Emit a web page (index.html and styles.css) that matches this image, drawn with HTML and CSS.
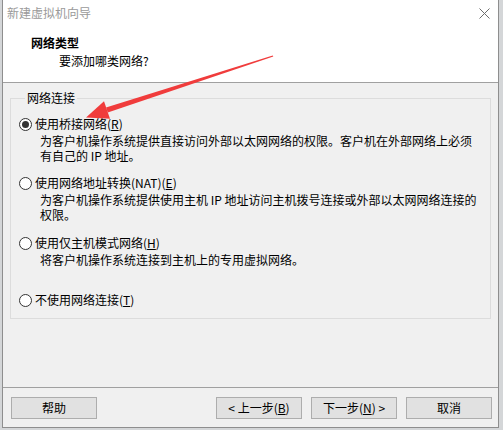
FILE: index.html
```html
<!DOCTYPE html>
<html lang="zh-CN">
<head>
<meta charset="utf-8">
<title>新建虚拟机向导</title>
<link rel="stylesheet" href="styles.css">
</head>
<body>
<div class="window">
  <div class="titlebar">
    <span class="title">新建虚拟机向导</span>
    <svg class="close" width="11" height="11" viewBox="0 0 11 11"><path d="M0.5 0.5L10.5 10.5M10.5 0.5L0.5 10.5" stroke="#6d6d6d" stroke-width="1" fill="none"/></svg>
  </div>
  <div class="header">
    <div class="h-title">网络类型</div>
    <div class="h-sub">要添加哪类网络?</div>
  </div>
  <div class="main">
    <fieldset class="group">
      <legend>网络连接</legend>
      <div class="opt opt1">
        <div class="opt-label"><span class="radio checked"></span>使用桥接网络(<u>R</u>)</div>
        <div class="opt-desc">为客户机操作系统提供直接访问外部以太网网络的权限。客户机在外部网络上必须<br>有自己的 IP 地址。</div>
      </div>
      <div class="opt opt2">
        <div class="opt-label"><span class="radio"></span>使用网络地址转换(NAT)(<u>E</u>)</div>
        <div class="opt-desc">为客户机操作系统提供使用主机 IP 地址访问主机拨号连接或外部以太网网络连接的<br>权限。</div>
      </div>
      <div class="opt opt3">
        <div class="opt-label"><span class="radio"></span>使用仅主机模式网络(<u>H</u>)</div>
        <div class="opt-desc">将客户机操作系统连接到主机上的专用虚拟网络。</div>
      </div>
      <div class="opt opt4">
        <div class="opt-label"><span class="radio"></span>不使用网络连接(<u>T</u>)</div>
      </div>
    </fieldset>
  </div>
  <div class="footer">
    <button class="btn">帮助</button>
    <span class="spacer"></span>
    <button class="btn">&lt; 上一步(<u>B</u>)</button>
    <button class="btn">下一步(<u>N</u>) &gt;</button>
    <button class="btn">取消</button>
  </div>
  <svg class="arrow" width="503" height="430" viewBox="0 0 503 430">
    <polygon points="272.3,56.6 271.7,55.4 105,107.4 106.8,112.6" fill="#f03c3c"/>
    <polygon points="85,117.5 103,101.2 109,118.8" fill="#f03c3c"/>
  </svg>
</div>
</body>
</html>
```

FILE: styles.css
```css
* { box-sizing: border-box; }
html, body { margin: 0; padding: 0; }
body {
  width: 503px;
  height: 430px;
  overflow: hidden;
  background: #d4d6d8;
  font-family: "Noto Sans CJK SC", "Microsoft YaHei", sans-serif;
  font-size: 12px;
  color: #000;
}
.window {
  position: relative;
  margin-left: 2px;
  width: 497px;
  height: 428px;
  border: 1px solid #8e8e8e;
  border-top: none;
  background: #f0f0f0;
  display: flex;
  flex-direction: column;
}
.titlebar {
  height: 27px;
  background: #fff;
  display: flex;
  align-items: center;
  padding: 0 8px 1px 4px;
}
.title {
  color: #9a9a9a;
  line-height: 16px;
  flex: 1;
}
.close { margin-top: 0; margin-right: 0; }
.header {
  height: 56px;
  background: #fff;
  border-bottom: 1px solid #a0a0a0;
  padding: 8px 0 0 28px;
}
.h-title {
  font-weight: bold;
  line-height: 16px;
}
.h-sub {
  line-height: 16px;
  margin-top: 2px;
  padding-left: 28px;
}
.main {
  flex: 1;
  padding: 7px 7px 0 7px;
}
.group {
  margin: 0;
  width: 481px;
  border: 1px solid #dcdcdc;
  padding: 10px 0 10px 8px;
}
.group legend {
  margin-left: 6px;
  padding: 0 2px;
  line-height: 16px;
}
.opt-label {
  display: flex;
  align-items: center;
  line-height: 16px;
  white-space: nowrap;
}
.opt-desc {
  padding-left: 21px;
  line-height: 15px;
  margin-top: 1px;
  white-space: nowrap;
}
.opt2 { margin-top: 12px; }
.opt3 { margin-top: 13px; }
.opt4 { margin-top: 25px; }
.radio {
  width: 13px;
  height: 13px;
  border: 1px solid #333;
  border-radius: 50%;
  background: #fff;
  margin-right: 3px;
  position: relative;
  flex: none;
}
.radio.checked::after {
  content: "";
  position: absolute;
  left: 2px;
  top: 2px;
  width: 7px;
  height: 7px;
  border-radius: 50%;
  background: #333;
}
u { text-decoration: underline; text-underline-offset: 1px; }
.footer {
  height: 40px;
  border-top: 1px solid #a0a0a0;
  display: flex;
  align-items: flex-start;
  gap: 9px;
  padding: 9px 6px 0 8px;
}
.spacer { flex: 1; }
.btn {
  width: 86px;
  height: 22px;
  border: 1px solid #adadad;
  background: #e1e1e1;
  font-family: inherit;
  font-size: 12px;
  color: #000;
  padding: 0;
  line-height: 18px;
}
.arrow {
  position: absolute;
  left: -2px;
  top: 0;
  pointer-events: none;
}
```
